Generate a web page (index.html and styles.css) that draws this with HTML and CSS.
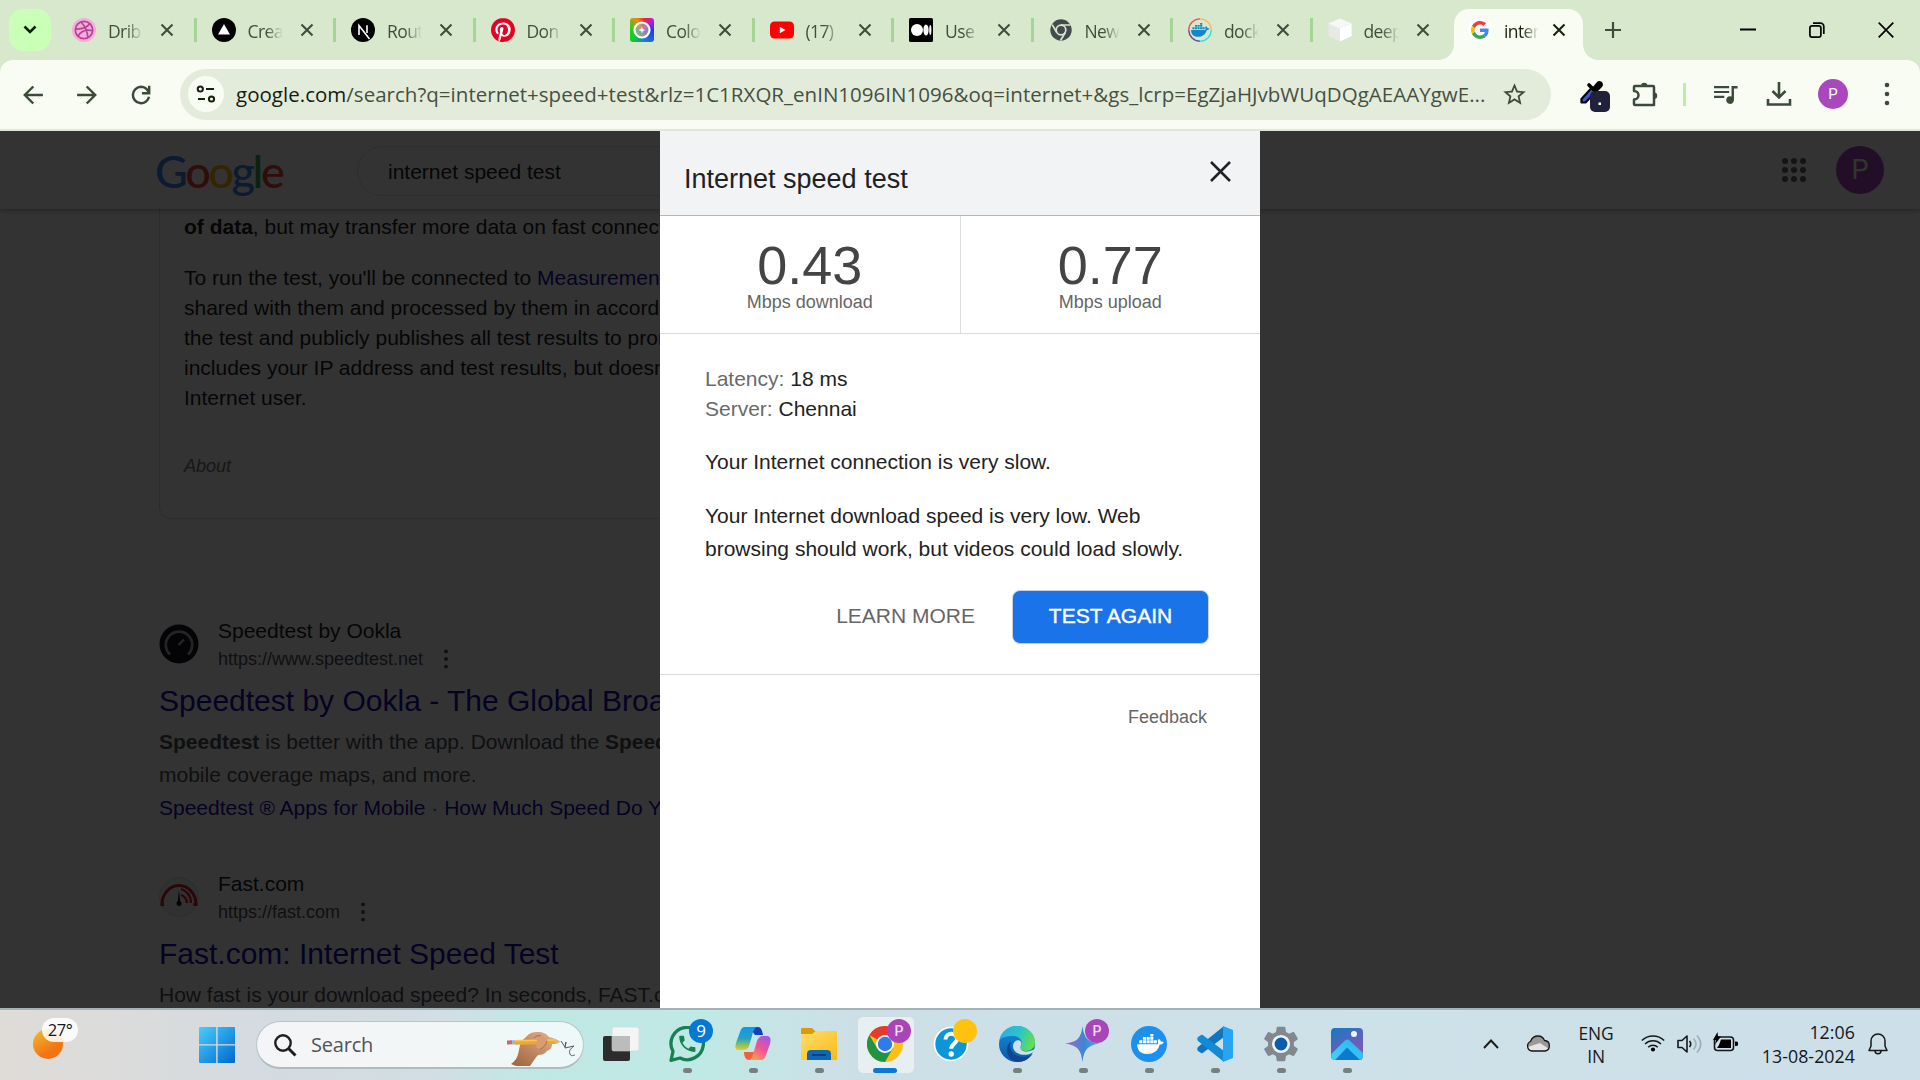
FILE: index.html
```html
<!DOCTYPE html>
<html lang="en">
<head>
<meta charset="utf-8">
<title>internet speed test - Google Search</title>
<link rel="stylesheet" href="styles.css">
</head>
<body>
<svg width="0" height="0" class="defs" aria-hidden="true">
  <defs>
    <symbol id="x" viewBox="0 0 14 14"><path d="M1.5 1.5l11 11M12.5 1.5l-11 11" stroke="currentColor" stroke-width="2.1" fill="none"/></symbol>
    <symbol id="dots" viewBox="0 0 8 26"><circle cx="4" cy="4" r="2.3"/><circle cx="4" cy="13" r="2.3"/><circle cx="4" cy="22" r="2.3"/></symbol>
    <symbol id="whale" viewBox="0 0 26 20"><path d="M0 10h20c.8-.6.6-2 0-3 0-1 .8-2 1.500-2.200 1.200 1 1.500 1.700 1.600 2.800 1-.3 2-.2 2.900.4-.8 1.700-2.200 2.200-4 2.200C20.500 16 16.500 19.500 9.500 19.500 3.500 19.500 0 16 0 10z"/><path d="M2 6h3v3H2zM5.600 6h3v3h-3zM9.200 6h3v3h-3zM12.800 6h3v3h-3zM16.200 6h3v3h-3zM5.600 3h3v2.600h-3zM9.200 3h3v2.600h-3zM12.800 3h3v2.600h-3zM12.800 0h3v2.500h-3z"/></symbol>
  </defs>
</svg>
<div class="screen">
  <div class="tabstrip">
    <div class="tabsearch"><svg width="14" height="10" viewBox="0 0 14 10"><path d="M1.500 1.500L7 7l5.500-5.500" fill="none" stroke="#101f10" stroke-width="2.600"/></svg></div>
    <div class="tab"><svg class="fav" viewBox="0 0 24 24"><circle cx="12" cy="12" r="12" fill="#fba9de"/><g fill="none" stroke="#b0488f" stroke-width="1.700"><circle cx="12" cy="12" r="8.700"/><path d="M9 4c4 4 6.500 9 7 16M3.500 11c7 .3 11.500-1.500 14.500-5.500M6 18.200c3-5.500 8-7.200 14.700-5.500"/></g></svg><span class="label">Drib</span><svg class="close"><use href="#x"/></svg></div>
    <div class="tab"><svg class="fav" viewBox="0 0 24 24"><circle cx="12" cy="12" r="12"/><path d="M12 6l6 10.500H6z" fill="#fff"/></svg><span class="label">Crea</span><svg class="close"><use href="#x"/></svg></div>
    <div class="tab"><svg class="fav" viewBox="0 0 24 24"><circle cx="12" cy="12" r="12"/><path d="M8 17V7.500L18.500 21M16 7.200V15" stroke="#fff" stroke-width="1.600" fill="none"/></svg><span class="label">Rout</span><svg class="close"><use href="#x"/></svg></div>
    <div class="tab"><svg class="fav" viewBox="0 0 24 24"><circle cx="12" cy="12" r="11.500" fill="#fff"/><path fill="#e60023" d="M12.017 0C5.396 0 .029 5.367.029 11.987c0 5.079 3.158 9.417 7.618 11.162-.105-.949-.199-2.403.041-3.439.219-.937 1.406-5.957 1.406-5.957s-.359-.72-.359-1.781c0-1.663.967-2.911 2.168-2.911 1.024 0 1.518.769 1.518 1.688 0 1.029-.653 2.567-.992 3.992-.285 1.193.6 2.165 1.775 2.165 2.128 0 3.768-2.245 3.768-5.487 0-2.861-2.063-4.869-5.008-4.869-3.41 0-5.409 2.562-5.409 5.199 0 1.033.394 2.143.889 2.741.099.12.112.225.085.345-.09.375-.293 1.199-.334 1.363-.053.225-.172.271-.401.165-1.495-.69-2.433-2.878-2.433-4.646 0-3.776 2.748-7.252 7.92-7.252 4.158 0 7.392 2.967 7.392 6.923 0 4.135-2.607 7.462-6.233 7.462-1.214 0-2.354-.629-2.758-1.379l-.749 2.848c-.269 1.045-1.004 2.352-1.498 3.146 1.123.345 2.306.535 3.55.535 6.607 0 11.985-5.365 11.985-11.987C23.97 5.39 18.592.026 11.985.026L12.017 0z"/></svg><span class="label">Don</span><svg class="close"><use href="#x"/></svg></div>
    <div class="tab"><span class="fav wheel"><svg viewBox="0 0 24 24"><circle cx="12" cy="12" r="7.500" fill="#b8a0a8" fill-opacity=".7" stroke="#fff" stroke-width="2.200"/><path d="M12 9.500v5M9.500 12h5" stroke="#fff" stroke-width="1.300"/></svg></span><span class="label">Colo</span><svg class="close"><use href="#x"/></svg></div>
    <div class="tab"><svg class="fav" viewBox="0 0 24 24"><rect y="3.500" width="24" height="17" rx="4.500" fill="#f00"/><path d="M9.800 8.800l5.600 3.200-5.600 3.200z" fill="#fff"/></svg><span class="label">(17)</span><svg class="close"><use href="#x"/></svg></div>
    <div class="tab"><svg class="fav" viewBox="0 0 24 24"><rect width="24" height="24" rx="1.500"/><g fill="#fff"><circle cx="8" cy="12" r="6"/><ellipse cx="17" cy="12" rx="2.600" ry="5.600"/><ellipse cx="21.300" cy="12" rx="1.100" ry="5"/></g></svg><span class="label">Use</span><svg class="close"><use href="#x"/></svg></div>
    <div class="tab"><svg class="fav" viewBox="0 0 24 24"><circle cx="12" cy="12" r="10.700" fill="#454a4c"/><circle cx="12" cy="12" r="4.800" fill="none" stroke="#d7e8cd" stroke-width="1.700"/><path d="M12 7h9.500M7.800 14.500L3.200 6.600M16.300 14.500l-4.800 8" stroke="#d7e8cd" stroke-width="1.700"/></svg><span class="label">New</span><svg class="close"><use href="#x"/></svg></div>
    <div class="tab"><svg class="fav" viewBox="0 0 24 24"><g fill="none" stroke-width="1.300"><path d="M.8 12A11.200 11.200 0 0 1 12 .8" stroke="#ff4a55"/><path d="M12 .8A11.200 11.200 0 0 1 23.200 12" stroke="#ffb45c"/><path d="M23.200 12A11.200 11.200 0 0 1 12 23.200" stroke="#2ee0e6"/><path d="M12 23.200A11.200 11.200 0 0 1 .8 12" stroke="#6b4a8e"/></g><use href="#whale" x="3" y="4.500" width="18.500" height="15" fill="#1488c6"/></svg><span class="label">dock</span><svg class="close"><use href="#x"/></svg></div>
    <div class="tab last"><svg class="fav" viewBox="0 0 24 24"><path d="M12 .5l11.500 5V18L12 23.500.5 18V5.500z" fill="#e8e9e6"/><path d="M12 10.500l11.500-5V18L12 23.500z" fill="#fff"/><path d="M12 .5l11.500 5-11.500 5-11.500-5z" fill="#f7f7f5"/></svg><span class="label">deep</span><svg class="close"><use href="#x"/></svg></div>
    <div class="tab active"><span class="fav gfav"><svg width="18" height="18" viewBox="0 0 48 48"><path fill="#EA4335" d="M24 9.500c3.540 0 6.710 1.220 9.210 3.600l6.850-6.850C35.900 2.380 30.470 0 24 0 14.620 0 6.510 5.380 2.560 13.220l7.980 6.190C12.430 13.720 17.740 9.500 24 9.500z"/><path fill="#4285F4" d="M46.980 24.550c0-1.570-.15-3.090-.38-4.550H24v9.020h12.940c-.58 2.960-2.260 5.480-4.780 7.180l7.730 6c4.510-4.180 7.090-10.360 7.090-17.650z"/><path fill="#FBBC05" d="M10.530 28.590c-.48-1.450-.76-2.990-.76-4.590s.27-3.140.76-4.590l-7.980-6.190C.92 16.460 0 20.120 0 24c0 3.880.92 7.540 2.560 10.780l7.970-6.190z"/><path fill="#34A853" d="M24 48c6.480 0 11.930-2.130 15.890-5.810l-7.730-6c-2.150 1.450-4.920 2.300-8.160 2.300-6.260 0-11.570-4.220-13.470-9.910l-7.980 6.190C6.510 42.620 14.620 48 24 48z"/></svg></span><span class="label">inter</span><svg class="close"><use href="#x"/></svg></div>
    <svg class="newtab" width="16" height="16" viewBox="0 0 16 16"><path d="M8 0v16M0 8h16" stroke="#3d4f3b" stroke-width="2.200"/></svg>
    <div class="winbtns">
      <svg width="16" height="16" viewBox="0 0 16 16"><path d="M0 7.500h16" stroke="#000" stroke-width="2"/></svg>
      <svg width="16" height="16" viewBox="0 0 16 16"><g fill="none" stroke="#000" stroke-width="1.700"><rect x=".9" y="3.900" width="11" height="11.200" rx="2.200"/><path d="M4 1.200h7.500a3.300 3.300 0 0 1 3.300 3.300V12"/></g></svg>
      <svg width="16" height="16" viewBox="0 0 16 16"><path d="M.7.700l14.600 14.600M15.300.7L.7 15.300" stroke="#000" stroke-width="1.700"/></svg>
    </div>
  </div>

  <div class="toolbar">
    <svg class="nav" viewBox="0 0 24 24"><path d="M20.500 11H7.400l5.600-5.600L11.500 4l-8 8 8 8 1.500-1.410L7.400 13h13.100z"/></svg>
    <svg class="nav" viewBox="0 0 24 24"><path d="M3.500 11h13.100L11 5.400 12.500 4l8 8-8 8-1.500-1.410L16.600 13H3.500z"/></svg>
    <svg class="nav" viewBox="0 0 24 24"><path d="M12 5a7 7 0 1 0 6.900 8.500M19 4v6.500h-6.200M18.500 9.500A7.500 7.500 0 0 0 12 5" fill="none" stroke="#3b4b38" stroke-width="2.100"/></svg>
    <div class="omnibox">
      <span class="site"><svg width="20" height="20" viewBox="0 0 20 20"><g fill="none" stroke="#15220f" stroke-width="2"><circle cx="4.300" cy="5" r="2.600"/><path d="M10 5h8M2 15h7"/><circle cx="15.500" cy="15" r="2.600"/></g></svg></span>
      <span class="url"><b>google.com</b>/search?q=internet+speed+test&amp;rlz=1C1RXQR_enIN1096IN1096&amp;oq=internet+&amp;gs_lcrp=EgZjaHJvbWUqDQgAEAAYgwE...</span>
      <svg class="star" viewBox="0 0 24 24"><path d="M22 9.240l-7.190-.62L12 2 9.190 8.630 2 9.240l5.460 4.730L5.820 21 12 17.270 18.180 21l-1.630-7.030L22 9.240zM12 15.400l-3.760 2.270 1-4.280-3.320-2.880 4.380-.38L12 6.100l1.710 4.040 4.380.38-3.320 2.880 1 4.280L12 15.400z"/></svg>
    </div>
    <div class="tools">
      <svg class="picker" width="34" height="34" viewBox="0 0 34 34"><path d="M2.500 23.500v-3.500L12.500 9l4 4L6.500 23.500z" fill="#3f57d8" stroke="#05060c" stroke-width="2.200" stroke-linejoin="round"/><path d="M10 6l10 10" stroke="#000" stroke-width="3.600" stroke-linecap="round"/><path d="M13 9l5-6c3-3 8 1 5 5l-5 5z"/><rect x="11" y="12" width="20" height="21" rx="5" fill="#20223a"/><rect x="19.500" y="23.500" width="2.500" height="2.500" fill="#fff"/></svg>
      <svg class="puzzle" width="26" height="26" viewBox="0 0 26 26"><path d="M3 5h18a1 1 0 0 1 1 1v18H3a1 1 0 0 1-1-1v-4.500c6 0 6-8.500 0-8.500V6a1 1 0 0 1 1-1z" fill="none" stroke="#3b4b38" stroke-width="2.500" stroke-linejoin="round"/><path d="M9 5a3.200 3.200 0 0 1 6.400 0zM22 11.500a3.200 3.200 0 0 1 0 6.400z" fill="#3b4b38"/></svg>
      <span class="bar"></span>
      <svg class="music" width="29" height="29" viewBox="0 0 24 24" fill="#3b4b38"><path d="M15 5H2.500v1.800H15zM15 9H2.500v1.800H15zM2.500 14.800H11V13H2.500zM17 5v8.600a3.200 3.200 0 1 0 2 3V7h3V5z"/></svg>
      <svg class="down" width="26" height="26" viewBox="0 0 26 26"><path d="M13 1v15M6.500 10l6.500 6.500 6.500-6.500M2 18v5.500h22V18" fill="none" stroke="#3b4b38" stroke-width="2.600"/></svg>
      <span class="avatar">P</span>
      <svg class="more" width="8" height="26"><use href="#dots"/></svg>
    </div>
  </div>

  <div class="viewport">
    <div class="ghead">
      <div class="logo"><span class="b">G</span><span class="r">o</span><span class="y">o</span><span class="b">g</span><span class="g">l</span><span class="r">e</span></div>
      <div class="searchbox">internet speed test</div>
      <svg class="apps" width="26" height="26" viewBox="0 0 26 26"><g fill="#5f6368"><circle cx="4" cy="4" r="3"/><circle cx="13" cy="4" r="3"/><circle cx="22" cy="4" r="3"/><circle cx="4" cy="13" r="3"/><circle cx="13" cy="13" r="3"/><circle cx="22" cy="13" r="3"/><circle cx="4" cy="22" r="3"/><circle cx="13" cy="22" r="3"/><circle cx="22" cy="22" r="3"/></g></svg>
      <span class="gavatar">P</span>
    </div>
    <div class="results">
      <div class="card">
        <p><b>of data</b>, but may transfer more data on fast connections.</p>
        <p>To run the test, you'll be connected to <a>Measurement Lab</a><br>shared with them and processed by them in accordance<br>the test and publicly publishes all test results to promote<br>includes your IP address and test results, but doesn't<br>Internet user.</p>
        <p class="about">About</p>
      </div>
      <div class="result">
        <div class="site-row">
          <svg width="40" height="40" viewBox="0 0 40 40"><circle cx="20" cy="20" r="19.500" fill="#141526"/><path d="M11 30.500a13.200 13.200 0 1 1 18 0" fill="none" stroke="#b8b8c0" stroke-width="2.600"/><path d="M19.500 21l5.500-5.500" stroke="#b8b8c0" stroke-width="2.400"/></svg>
          <div><div class="name">Speedtest by Ookla</div><div class="link">https://www.speedtest.net<svg class="kebab"><use href="#dots"/></svg></div></div>
        </div>
        <h3>Speedtest by Ookla - The Global Broadband Speed Test</h3>
        <p class="snip"><b>Speedtest</b> is better with the app. Download the <b>Speedtest</b> app<br>mobile coverage maps, and more.<br><a>Speedtest ® Apps for Mobile</a> · <a>How Much Speed Do You Need</a></p>
      </div>
      <div class="result">
        <div class="site-row">
          <svg width="40" height="40" viewBox="0 0 40 40"><circle cx="20" cy="20" r="19.300" fill="#f0f8f8" stroke="#d6dadc"/><g fill="none" stroke="#d81b24" stroke-width="3"><path d="M5 27.500H3A17 19 0 1 1 37 27.500h-2.500"/><path d="M22 12a14 14 0 0 1 10 14M22 18a8 9 0 0 1 6 8" stroke-width="2.300"/></g><path d="M20 13l1.500 14h-3z" fill="#111"/><circle cx="20" cy="26.500" r="2.500" fill="#111"/></svg>
          <div><div class="name">Fast.com</div><div class="link">https://fast.com<svg class="kebab"><use href="#dots"/></svg></div></div>
        </div>
        <h3>Fast.com: Internet Speed Test</h3>
        <p class="snip">How fast is your download speed? In seconds, FAST.com's simple</p>
      </div>
    </div>

    <div class="overlay">
      <div class="dialog">
        <div class="dhead"><h1>Internet speed test</h1><svg class="dclose" width="21" height="21" viewBox="0 0 21 21"><path d="M1 1l19 19M20 1L1 20" stroke="#202124" stroke-width="2.500"/></svg></div>
        <div class="speeds">
          <div class="speed"><div class="num">0.43</div><div class="unit">Mbps download</div></div>
          <div class="speed"><div class="num">0.77</div><div class="unit">Mbps upload</div></div>
        </div>
        <div class="dbody">
          <p class="kv"><span>Latency:</span> 18 ms<br><span>Server:</span> Chennai</p>
          <p class="verdict">Your Internet connection is very slow.</p>
          <p class="detail">Your Internet download speed is very low. Web browsing should work, but videos could load slowly.</p>
          <div class="actions"><span class="learn">LEARN MORE</span><span class="again">TEST AGAIN</span></div>
        </div>
        <div class="feedback">Feedback</div>
      </div>
    </div>
  </div>

  <div class="taskbar">
    <div class="weather"><svg width="30" height="30" viewBox="0 0 30 30"><defs><linearGradient id="sun" x1="0" y1="0" x2=".6" y2="1"><stop offset="0" stop-color="#f0c030"/><stop offset=".8" stop-color="#f27413"/></linearGradient></defs><circle cx="15" cy="15" r="15" fill="url(#sun)"/></svg><span class="temp">27°</span></div>
    <svg class="start" width="36" height="36" viewBox="0 0 36 36"><defs><linearGradient id="win" x1="0" y1="0" x2="1" y2="1"><stop offset="0" stop-color="#49cdfd"/><stop offset="1" stop-color="#0069cc"/></linearGradient></defs><path fill="url(#win)" d="M1 0h16.200v17.200H0V1a1 1 0 0 1 1-1zM18.600 0H35a1 1 0 0 1 1 1v16.200H18.600zM0 18.600h17.200V36H1a1 1 0 0 1-1-1zM18.600 18.600H36V35a1 1 0 0 1-1 1H18.600z"/></svg>
    <div class="tsearch">
      <svg width="24" height="24" viewBox="0 0 24 24"><circle cx="10" cy="10" r="7.700" fill="none" stroke="#1d1f20" stroke-width="2.400"/><path d="M15.500 15.500l7 7" stroke="#1d1f20" stroke-width="3"/></svg>
      <span>Search</span>
      <svg class="hand" width="70" height="36" viewBox="0 0 70 36"><defs><linearGradient id="skin" x1="1" y1="0" x2="0" y2="1"><stop offset="0" stop-color="#e8b78f"/><stop offset="1" stop-color="#9c603b"/></linearGradient></defs><path d="M5 34c6-4 7-9 8-14 1-6 3-10 7-13 3-4 7-5 12-5 5 0 9 2 11 5 4 1 8 2 10 4 0 3-3 3-7 3 0 4-2 6-5 7-2 3-6 4-9 4-3 3-5 7-8 11-6 1-13 1-19-2z" fill="url(#skin)"/><path d="M1 10.500l5-.2v4l-5 .2z" fill="#d4607a"/><path d="M6 10.300l3-.1v4.300l-3 .1z" fill="#aab3bb"/><path d="M9 10l40-.8 5 2.500-5 2-40 1z" fill="#f2a728"/><path d="M9 10l40-.8v1.500L9 11.500z" fill="#fbc655"/><path d="M49 9.500l6 2-6 2z" fill="#d8b98a"/><path d="M31 6c4-2 9 0 10 4 0 4-3 8-7 9-4 0-5-4-3-7 0-2-1-4 0-6z" fill="#d89d73"/><path d="M28 8c2-2 4-3 7-2M34 19c3-1 6-4 7-8" stroke="#9a6240" fill="none" stroke-width=".8"/><path d="M55 11l4 6 1-5-1 6 9-2c-2 2-6 4-4 8 1 3 4 1 5 1" fill="none" stroke="#4c5a5c" stroke-width="1"/></svg>
    </div>
    <div class="apps-row">
      <div class="app"><svg viewBox="0 0 36 36"><rect y="9" width="27" height="25" rx="2" fill="#2c2c2c"/><rect x="9" width="27" height="24" rx="2" fill="#f4f4f4" stroke="#cfd4d4" stroke-width=".6"/><path d="M9 9h18v15H11a2 2 0 0 1-2-2z" fill="#bcbcbc"/></svg></div>
      <div class="app run"><svg viewBox="0 0 36 36"><path d="M2 34.300l2-9A16.200 16.200 0 1 1 11 32z" fill="none" stroke="#168254" stroke-width="3.300" stroke-linejoin="round"/><g transform="translate(7.500 7) scale(.9)"><path fill="#168254" d="M6.620 10.790c1.440 2.830 3.760 5.140 6.590 6.590l2.200-2.200c.27-.27.67-.36 1.020-.24 1.120.37 2.330.57 3.570.57.55 0 1 .45 1 1V20c0 .55-.45 1-1 1-9.390 0-17-7.610-17-17 0-.55.45-1 1-1h3.500c.55 0 1 .45 1 1 0 1.250.2 2.450.57 3.570.11.35.03.74-.25 1.020l-2.200 2.200z"/></g></svg><span class="badge blue">9</span></div>
      <div class="app run"><svg viewBox="0 0 36 36"><defs><linearGradient id="cp1" x1="0" y1="0" x2="0" y2="1"><stop offset="0" stop-color="#1593ef"/><stop offset=".5" stop-color="#25a3c0"/><stop offset="1" stop-color="#e6cf20"/></linearGradient><linearGradient id="cp2" x1=".8" y1="0" x2=".2" y2="1"><stop offset="0" stop-color="#a557e8"/><stop offset=".5" stop-color="#ee5593"/><stop offset="1" stop-color="#fda04d"/></linearGradient></defs><path d="M14 1h9c3 0 4 3 5 8h-8z" fill="#153fbd"/><path d="M9 26c0 5 2 8 5 8h8l4-8z" fill="#f0603f"/><path d="M10 1h12c-3 1-4 5-5 9l-3 10c-1 3-3 4-6 4H4c-4 0-4-3-3-7l4-11c1-3 2-5 5-5z" fill="url(#cp1)"/><path d="M26 34H14c3-1 4-5 5-9l3-10c1-3 3-5 6-5h4c4 0 4 4 3 8l-4 11c-1 3-2 5-5 5z" fill="url(#cp2)"/></svg></div>
      <div class="app run"><svg viewBox="0 0 36 36"><defs><linearGradient id="fold" x1="0" y1="0" x2="1" y2="1"><stop offset="0" stop-color="#ffdf6c"/><stop offset="1" stop-color="#fbb915"/></linearGradient></defs><path d="M1 2h10l4 4v4H0V3a1 1 0 0 1 1-1z" fill="#dc9b05"/><path d="M0 8h11l4-3h20a1 1 0 0 1 1 1v28H0z" fill="url(#fold)"/><path d="M6 34v-6a4 4 0 0 1 4-4h16a4 4 0 0 1 4 4v6z" fill="#0d67b5"/><path d="M11 29h14" stroke="#053a72" stroke-width="1.600"/></svg></div>
      <div class="app run current"><svg viewBox="0 0 36 36"><circle cx="18" cy="18" r="18" fill="#fcc013"/><path d="M18 18L2.400 9A18 18 0 0 1 33.600 9H18z" fill="#e63a2e"/><path d="M18 18l7.800 4.500L18 36A18 18 0 0 1 2.400 9l7.800 13.500z" fill="#229342"/><circle cx="18" cy="18" r="9" fill="#fff"/><circle cx="18" cy="18" r="7.200" fill="#2f7bee"/></svg><span class="badge purple">P</span></div>
      <div class="app"><svg viewBox="0 0 36 36"><circle cx="18" cy="18" r="16.500" fill="#0a97d9" stroke="#fff" stroke-width="1.600"/><path d="M12.500 13.500c0-7.500 11.500-7.500 11.500-.5 0 4.500-5.800 4.500-5.800 9.800" fill="none" stroke="#fff" stroke-width="4"/><circle cx="18.200" cy="28" r="2.700" fill="#fff"/></svg><span class="badge yellow"></span></div>
      <div class="app run"><svg viewBox="0 0 36 36"><defs><linearGradient id="eg" x1="0" y1=".3" x2="1" y2=".6"><stop offset="0" stop-color="#29aee6"/><stop offset=".5" stop-color="#2bc4c7"/><stop offset="1" stop-color="#66e04b"/></linearGradient><linearGradient id="eb" x1="0" y1="0" x2="0" y2="1"><stop offset="0" stop-color="#148edb"/><stop offset="1" stop-color="#0a59a8"/></linearGradient></defs><circle cx="18" cy="18" r="18" fill="url(#eb)"/><path d="M.5 14C2 6 9 0 18 0c10 0 18 7 18 16 0 6-4 9-9 9-4 0-6-1-6-3s2-2 2-5c0-4-4-7-9-7-6 0-11 1-13.500 4z" fill="url(#eg)"/><path d="M12 15c-3 9 3 16 12 16 4 0 7-1 9.500-3C30 33 25 36 19 36c-7-1-12-7-11-13 .5-4 2-6 4-8z" fill="#10458f"/><path d="M14 20.500c0-4 3-7.500 6.500-6 3 1.500 2 4.500 1 6-1 3 2 5 6 5 3 0 6-1 9-3l-2.500 4c-8 5-20 1.500-20-6z" fill="#cde0e8"/></svg></div>
      <div class="app run"><svg viewBox="0 0 36 36"><defs><linearGradient id="sp" x1="0" y1=".5" x2="1" y2=".5"><stop offset="0" stop-color="#b565b5"/><stop offset=".55" stop-color="#3a86d8"/><stop offset="1" stop-color="#58a8dc"/></linearGradient></defs><path d="M17.500 0c1.500 12 5 16 17 17.500-12 2-15.500 6-17 18.500-1.500-12.500-5-16.500-17.500-18.500C12.500 16 16 12 17.500 0z" fill="url(#sp)"/></svg><span class="badge purple">P</span></div>
      <div class="app run"><svg viewBox="0 0 36 36"><circle cx="18" cy="18" r="18" fill="#1d8fec"/><use href="#whale" x="6" y="8" width="27" height="20.500" fill="#fff"/></svg></div>
      <div class="app run"><svg viewBox="0 0 36 36"><path d="M27 0v11L5 27.500 1 25c-1-1-1-3 0-4z" fill="#0e76bd"/><path d="M27 36V25L5 8.500 1 11c-1 1-1 3 0 4z" fill="#118bd6"/><path d="M26 0l10 4v28l-10 4z" fill="#27a5f2"/></svg></div>
      <div class="app run"><svg viewBox="2 2 20 20"><g fill="#828890"><path d="M19.140 12.940c.04-.3.06-.61.06-.94 0-.32-.02-.64-.07-.94l2.030-1.580c.18-.14.23-.41.12-.61l-1.920-3.320c-.12-.22-.37-.29-.59-.22l-2.390.96c-.5-.38-1.030-.7-1.620-.94l-.36-2.540c-.04-.24-.24-.41-.48-.41h-3.840c-.24 0-.43.17-.47.41l-.36 2.540c-.59.24-1.130.57-1.620.94l-2.390-.96c-.22-.08-.47 0-.59.22L2.740 8.870c-.12.21-.08.47.12.61l2.030 1.580c-.05.3-.09.63-.09.94s.02.64.07.94l-2.030 1.580c-.18.14-.23.41-.12.61l1.920 3.320c.12.22.37.29.59.22l2.390-.96c.5.38 1.030.7 1.620.94l.36 2.540c.05.24.24.41.48.41h3.840c.24 0 .44-.17.47-.41l.36-2.540c.59-.24 1.130-.56 1.620-.94l2.390.96c.22.08.47 0 .59-.22l1.920-3.320c.12-.22.07-.47-.12-.61l-2.010-1.580z"/></g><circle cx="12" cy="12" r="6" fill="#828890"/><circle cx="12" cy="12" r="4.300" fill="#0b5cad" stroke="#f0f1f2" stroke-width="1.500"/></svg></div>
      <div class="app run"><svg viewBox="0 0 36 36"><defs><linearGradient id="ph" x1="0" y1="0" x2=".6" y2="1"><stop offset="0" stop-color="#137ac6"/><stop offset="1" stop-color="#8a54b4"/></linearGradient><linearGradient id="pm" x1="1" y1="0" x2="0" y2="1"><stop offset="0" stop-color="#2cb1ec"/><stop offset="1" stop-color="#3cd5fb"/></linearGradient></defs><rect x="2" y="2" width="32" height="32" rx="4" fill="url(#ph)"/><path d="M7 33.700L18 21l15 12.500c-1 .5-2 .5-3 .5H7z" fill="#0d7ad2"/><path d="M2.300 31.500v-3.500L16 14.500c1.500-1.400 3-1.400 4.500 0L34 27v3c0 2-1 3.400-3 4L18 21.500 6 34c-2 0-3.200-1-3.700-2.500z" fill="url(#pm)"/><circle cx="25" cy="8" r="3" fill="#f2f6fb"/></svg></div>
    </div>
    <div class="tray">
      <svg class="chev" width="16" height="10" viewBox="0 0 16 10"><path d="M1 9l7-7.500L15 9" fill="none" stroke="#1a1a1a" stroke-width="1.900"/></svg>
      <svg class="cloud" width="25" height="17" viewBox="0 0 25 17"><path d="M6 16a5 5 0 0 1-1.500-9.500C6 2.500 9 1 12 1s5.500 2 6.500 4.500A5.300 5.300 0 0 1 19 16z" fill="#999"/><path d="M1.500 12L14 8l9 6c-1 1.500-2 2-4 2H6c-2 0-4-1-4.500-4z" fill="#e6e4e4"/><path d="M6 16a5 5 0 0 1-1.500-9.500C6 2.500 9 1 12 1s5.500 2 6.500 4.500A5.300 5.300 0 0 1 19 16z" fill="none" stroke="#151515" stroke-width="1.300"/></svg>
      <div class="lang">ENG<br>IN</div>
      <svg class="wifi" width="24" height="18" viewBox="0 0 24 18"><g fill="none" stroke="#15181a" stroke-width="1.500"><path d="M.8 6.500a16 16 0 0 1 22.400 0M4 10a11.500 11.500 0 0 1 16 0M7.200 13.200a7 7 0 0 1 9.600 0"/></g><circle cx="12" cy="15.500" r="2.100"/></svg>
      <svg class="vol" width="25" height="20" viewBox="0 0 25 20"><g fill="none" stroke="#15181a" stroke-width="1.600" stroke-linejoin="round"><path d="M1 6.500h4L10 2v16l-5-4.500H1z"/><path d="M12.500 7q2.500 3 0 6"/><path d="M16.500 4.500q5 5.500 0 11M20 1.500q7.500 8.500 0 17" stroke="#9fb0b6"/></g></svg>
      <svg class="batt" width="25" height="20" viewBox="0 0 25 20"><rect x="1.500" y="5" width="19" height="13.500" rx="3" fill="none" stroke="#15181a" stroke-width="1.600"/><path d="M8 7.500h10v8.500H4l2-3z"/><path d="M22 9.500h1.200a1.300 1.300 0 0 1 0 4.500H22z"/><path d="M4.500 0L0 8h3l-1 4.500L8 4.500H5z"/></svg>
      <div class="clock">12:06<br>13-08-2024</div>
      <svg class="bell" width="20" height="22" viewBox="0 0 20 22"><path d="M10 1a7 7 0 0 0-7 7v5l-2 4.500h18L17 13V8a7 7 0 0 0-7-7zM7 18c0 3.500 6 3.500 6 0" fill="none" stroke="#15181a" stroke-width="1.500" stroke-linejoin="round"/></svg>
    </div>
  </div>
</div>
</body>
</html>
```
FILE: styles.css
```css
* { box-sizing: border-box; }
body { margin: 0; }
p, h1, h3 { margin: 0; font-weight: normal; }
svg { flex: none; display: block; }
.defs { position: absolute; }

.screen {
  width: 1920px;
  height: 1080px;
  overflow: hidden;
  display: flex;
  flex-direction: column;
  background: #d7e8cd;
  font-family: "Liberation Sans", Arial, sans-serif;
}

/* tab strip */
.tabstrip {
  height: 60px;
  flex: none;
  display: flex;
  align-items: center;
  padding-left: 9px;
  font-family: "Open Sans", "Noto Sans", sans-serif;
}
.tabsearch {
  width: 42px;
  height: 42px;
  margin-right: 6px;
  border-radius: 14px;
  background: #caffb8;
  display: flex;
  align-items: center;
  justify-content: center;
}
.tab {
  width: 139.5px;
  height: 24px;
  flex: none;
  display: flex;
  align-items: center;
  padding-left: 15px;
  border-right: 3px solid #a3d694;
}
.tab.last { border-color: transparent; }
.fav { width: 24px; height: 24px; flex: none; display: block; }
.wheel {
  border-radius: 3px;
  background: conic-gradient(from 45deg, #b51fe0, #2436e6 45deg, #1a7fd0 120deg, #12d020 190deg, #20d020 230deg, #f08a10 290deg, #f0202a 330deg, #b51fe0);
}
.gfav {
  border-radius: 50%;
  background: #fff;
  display: flex;
  align-items: center;
  justify-content: center;
}
.label {
  width: 36px;
  flex: none;
  margin-left: 12px;
  white-space: nowrap;
  font-size: 17.5px;
  letter-spacing: -0.6px;
  line-height: 24px;
  padding-top: 1px;
  color: #3d4f3b;
  -webkit-mask-image: linear-gradient(90deg, #000 50%, transparent 97%);
  mask-image: linear-gradient(90deg, #000 50%, transparent 97%);
}
.close { width: 14px; height: 14px; margin-left: 16px; color: #3d4f3b; }
.tab.active {
  position: relative;
  width: 129px;
  height: 51px;
  margin: 9px 0 0 2px;
  padding: 0 0 9px 14px;
  align-items: center;
  border: 0;
  border-radius: 15px 15px 0 0;
  background: #f8fcf2;
}
.tab.active .label, .tab.active .close { color: #18230f; }
.tab.active .close { margin-left: 11.5px; }
.tab.active::before, .tab.active::after {
  content: "";
  position: absolute;
  bottom: 0;
  width: 15px;
  height: 15px;
}
.tab.active::before { left: -15px; background: radial-gradient(circle at 0 0, transparent 14.500px, #f8fcf2 15px); }
.tab.active::after { right: -15px; background: radial-gradient(circle at 100% 0, transparent 14.500px, #f8fcf2 15px); }
.newtab { margin-left: 22px; }
.winbtns { margin-left: auto; display: flex; gap: 53px; padding-right: 26px; }

/* toolbar */
.toolbar {
  height: 71px;
  flex: none;
  display: flex;
  align-items: center;
  padding: 0 0 1px 19px;
  background: #f8fcf2;
  border-bottom: 2px solid #dfe6d6;
  border-radius: 13px 13px 0 0;
}
.nav { width: 28px; height: 28px; margin: 1px 26px 0 0; fill: #3b4b38; }
.omnibox {
  width: 1371px;
  height: 51px;
  margin-left: -1px;
  display: flex;
  align-items: center;
  padding-left: 8px;
  border-radius: 26px;
  background: #e3ecdb;
}
.site {
  width: 36px;
  height: 36px;
  border-radius: 50%;
  background: #f8fcf2;
  display: flex;
  align-items: center;
  justify-content: center;
}
.url {
  width: 1265px;
  margin-left: 12px;
  white-space: nowrap;
  font-family: "Open Sans", "Noto Sans", sans-serif;
  font-size: 20.5px;
  letter-spacing: 0.02px;
  line-height: 30px;
  color: #46503f;
}
.url b { font-weight: normal; color: #141b10; }
.star { width: 27px; height: 27px; fill: #3f4a3c; }
.tools { display: flex; align-items: center; }
.picker { margin: 3px 0 0 28px; }
.puzzle { margin-left: 19px; }
.bar { width: 3px; height: 23px; margin-left: 25px; background: #b9f0a5; }
.music { margin-left: 25px; }
.down { margin-left: 26px; }
.avatar {
  width: 30px;
  height: 30px;
  margin-left: 26px;
  border-radius: 50%;
  background: #ab47bc;
  color: #fff;
  font: 15px/30px Roboto, sans-serif;
  text-align: center;
}
.more { margin-left: 35px; fill: #3b4b38; }

/* page */
.viewport {
  position: relative;
  height: 877px;
  flex: none;
  overflow: hidden;
  background: #fff;
}
.ghead {
  position: relative;
  height: 78px;
  display: flex;
  align-items: center;
  padding: 2px 36px 0 155px;
  background: #fff;
  box-shadow: 0 1px 6px rgba(32, 33, 36, .4);
}
.logo {
  width: 202px;
  height: 60px;
  font: 500 45px/60px "Lato", "Open Sans", sans-serif;
  letter-spacing: -2.4px;
}
.logo .b { color: #4285f4; }
.logo .r { color: #ea4335; }
.logo .y { color: #fbbc05; }
.logo .g { color: #34a853; }
.searchbox {
  width: 860px;
  height: 50px;
  padding-left: 30px;
  border: 1px solid #dfe1e5;
  border-radius: 25px;
  font-size: 21px;
  line-height: 50px;
  color: #202124;
}
.apps { margin: -2px 0 0 auto; }
.gavatar {
  width: 48px;
  height: 48px;
  margin-left: 29px;
  margin-top: -2px;
  border-radius: 50%;
  background: #ab47bc;
  color: #fff;
  font: 27px/49px Roboto, sans-serif;
  text-align: center;
}
.results { width: 978px; padding-left: 159px; white-space: nowrap; color: #202124; }
.card {
  height: 310px;
  padding: 3px 0 0 24px;
  border: 1px solid #dadce0;
  border-top: 0;
  border-radius: 0 0 12px 12px;
  font-size: 21px;
  line-height: 30px;
}
.card p + p { margin-top: 21px; }
.card .about { margin-top: 40px; font-size: 18px; line-height: 27px; font-style: italic; color: #70757a; }
.results a { color: #1a0dab; }
.result { margin-top: 97px; }
.result + .result { margin-top: 45px; }
.site-row { display: flex; align-items: center; gap: 19px; height: 55px; }
.name { font-size: 21px; line-height: 30px; }
.link { display: flex; gap: 19px; font-size: 18px; line-height: 26px; color: #4d5156; }
.kebab { width: 8px; height: 22px; fill: #4d5156; margin: 2px 0 -8px; }
h3 { margin: 10px 0 5px; font-size: 30px; line-height: 39px; color: #1a0dab; }
.snip { font-size: 21px; line-height: 33px; color: #4d5156; }

/* lightbox */
.overlay {
  position: absolute;
  inset: 0;
  display: flex;
  justify-content: center;
  background: rgba(0, 0, 0, .8);
}
.dialog { width: 600px; background: #fff; color: #222; }
.dhead {
  height: 85px;
  display: flex;
  align-items: flex-start;
  justify-content: space-between;
  padding: 31px 29px 0 24px;
  background: #f1f3f5;
  border-bottom: 1px solid #b4b8b8;
}
.dhead h1 { font-size: 27px; line-height: 34px; color: #202124; }
.dclose { margin-top: -1px; }
.speeds { display: flex; height: 118px; border-bottom: 1px solid #dadcde; }
.speed { flex: 1; padding-top: 23px; text-align: center; }
.speed + .speed { border-left: 1px solid #dadcde; }
.num { font-size: 54px; line-height: 52px; color: #444; }
.unit { margin-top: 1px; font-size: 18px; line-height: 20px; color: #666; }
.dbody { height: 341px; padding: 30px 51px 0 45px; border-bottom: 1px solid #dadcde; font-size: 21px; }
.kv { line-height: 30px; }
.kv span { color: #6a6a6a; }
.verdict { margin-top: 21px; line-height: 33px; }
.detail { margin-top: 21px; line-height: 33px; }
.actions { display: flex; justify-content: flex-end; align-items: center; gap: 37px; margin-top: 25px; }
.learn { color: #666; margin-top: -2px; }
.again {
  width: 197px;
  height: 54px;
  border: 1px solid #c6d2e2;
  border-radius: 8px;
  background: #1a73e8;
  color: #fff;
  line-height: 49px;
  text-align: center;
  -webkit-text-stroke: .4px #fff;
}
.feedback { padding: 30px 53px 0 0; font-size: 18px; line-height: 24px; text-align: right; color: #666; }

/* taskbar */
.taskbar {
  height: 72px;
  flex: none;
  display: flex;
  border-top: 2px solid #a5b2b6;
  background: linear-gradient(90deg, #dfdcd8 0, #dadbdb 130px, #d5dbe0 250px, #d1dee3 440px, #bfe8e4 540px, #bfe9e5 700px, #cddfe6 850px, #cde1e9 1400px, #cddfe8 1920px);
  font-family: "Open Sans", "Noto Sans", sans-serif;
  color: #15181a;
}
.weather { position: relative; width: 199px; padding: 19px 0 0 33px; }
.temp {
  position: absolute;
  left: 42px;
  top: 8px;
  width: 36px;
  height: 24px;
  border-radius: 12px;
  background: rgba(255, 255, 255, .85);
  font-size: 16.5px;
  letter-spacing: -.4px;
  line-height: 24px;
  text-align: center;
}
.start { margin-top: 17px; }
.tsearch {
  width: 328px;
  height: 48px;
  margin: 11px 0 0 21px;
  padding: 0 9px 0 16px;
  display: flex;
  align-items: center;
  border: 1px solid #bac5c7;
  border-bottom: 2px solid #adbcbf;
  border-radius: 24px;
  background: rgba(255, 255, 255, .72);
  font-size: 20px;
  letter-spacing: -.2px;
  color: #505456;
}
.tsearch span { margin-left: 14px; }
.hand { margin: 7px -2px 0 auto; }
.apps-row { display: flex; margin-left: 4px; }
.app { position: relative; width: 66px; padding: 16px 15px 0; }
.app svg { width: 36px; height: 36px; }
.app:first-child svg { margin-top: 1px; }
.run::after {
  content: "";
  position: absolute;
  left: 29px;
  top: 58px;
  width: 9px;
  height: 5px;
  border-radius: 3px;
  background: #75807f;
}
.current::before {
  content: "";
  position: absolute;
  left: 5px;
  top: 6px;
  width: 56px;
  height: 56px;
  border: 1px solid #d2dcdf;
  border-radius: 6px;
  background: #e8eff2;
}
.current svg { position: relative; }
.current::after { left: 21px; width: 24px; background: #0a78d4; }
.badge {
  position: absolute;
  left: 35px;
  top: 9px;
  width: 24px;
  height: 24px;
  border-radius: 50%;
  color: #fff;
  font-size: 17px;
  line-height: 24px;
  text-align: center;
}
.blue { background: #0478d6; }
.purple { background: #a846b9; color: #f3d9f6; font: 500 14px/24px Roboto, sans-serif; }
.yellow { background: #ffc20e; }
.tray { margin-left: auto; display: flex; font-size: 17.4px; line-height: 23px; }
.chev { margin-top: 29px; }
.cloud { margin: 25px 0 0 27px; }
.lang { width: 60px; margin: 12px 0 0 15px; text-align: center; letter-spacing: -.2px; }
.wifi { margin: 24px 0 0 15px; }
.vol { margin: 24px 0 0 12px; }
.batt { margin: 22px 0 0 11px; }
.clock { width: 104px; margin: 10px 0 0 13px; font-size: 17.8px; line-height: 24px; text-align: right; letter-spacing: .05px; }
.bell { margin: 23px 32px 0 13px; }
```
